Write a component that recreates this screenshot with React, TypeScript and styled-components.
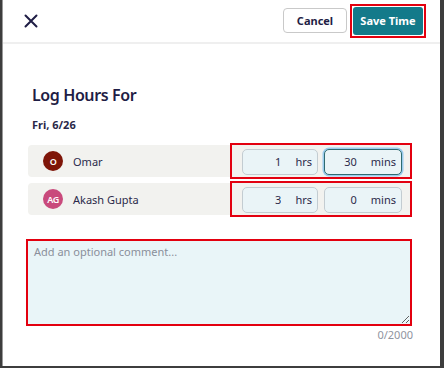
import styled, { createGlobalStyle } from "styled-components";

const navy = "#1f1d45";
const annotation = "#e3000f";

const GlobalStyle = createGlobalStyle`
  html, body {
    margin: 0;
    padding: 0;
    height: 100%;
  }
  body {
    background: #3d3d3d;
    font-family: "Noto Sans", "Open Sans", Arial, sans-serif;
    color: ${navy};
  }
`;

interface IPerson {
  initials: string;
  name: string;
  color: string;
  hours: number;
  mins: number;
  focusMins?: boolean;
}

const people: IPerson[] = [
  { initials: "O", name: "Omar", color: "#7e1508", hours: 1, mins: 30, focusMins: true },
  { initials: "AG", name: "Akash Gupta", color: "#c94a7c", hours: 3, mins: 0 },
];

export default function App() {
  return (
    <>
      <GlobalStyle />
      <Frame>
        <Header>
          <CloseButton aria-label="Close">
            <svg width="14" height="14" viewBox="0 0 14 14">
              <path d="M1.5 1.5 L12.5 12.5 M12.5 1.5 L1.5 12.5" stroke={navy} strokeWidth="2" strokeLinecap="round" />
            </svg>
          </CloseButton>
          <Actions>
            <CancelButton>Cancel</CancelButton>
            <Highlight>
              <SaveButton>Save Time</SaveButton>
            </Highlight>
          </Actions>
        </Header>
        <Body>
          <Title>Log Hours For</Title>
          <DateLabel>Fri, 6/26</DateLabel>
          <Rows>
            {people.map((p) => (
              <Row key={p.name}>
                <Avatar color={p.color}>{p.initials}</Avatar>
                <Name>{p.name}</Name>
                <InputGroup>
                  <TimeField width={76}>
                    <TimeInput readOnly value={p.hours} />
                    <Unit>hrs</Unit>
                  </TimeField>
                  <TimeField width={78} focused={p.focusMins}>
                    <TimeInput readOnly value={p.mins} />
                    <Unit>mins</Unit>
                  </TimeField>
                </InputGroup>
              </Row>
            ))}
          </Rows>
          <Comment placeholder="Add an optional comment..." />
          <Counter>0/2000</Counter>
        </Body>
      </Frame>
    </>
  );
}

const Frame = styled.div`
  margin-left: 2px;
  width: 438px;
  height: 366px;
  background: #fff;
  border-left: 1px solid #9a9a9a;
  box-sizing: border-box;
`;

const Header = styled.div`
  height: 44px;
  box-sizing: border-box;
  border-bottom: 2px solid #efefef;
  display: flex;
  align-items: center;
  justify-content: space-between;
  padding: 0 14px 0 21px;
`;

const CloseButton = styled.button`
  border: none;
  background: none;
  padding: 0;
  width: 14px;
  height: 14px;
  display: flex;
  margin-top: -1px;
`;

const Actions = styled.div`
  display: flex;
  align-items: center;
  gap: 3px;
  margin-top: -1px;
`;

const CancelButton = styled.button`
  width: 64px;
  height: 25px;
  border: 1px solid #c9c9c9;
  border-radius: 4px;
  background: #fff;
  color: ${navy};
  font-family: inherit;
  font-size: 11px;
  font-weight: 700;
  padding: 0;
`;

const Highlight = styled.div`
  display: flex;
  padding: 1px;
  border: 2px solid ${annotation};
`;

const SaveButton = styled.button`
  width: 70px;
  height: 28px;
  border: none;
  border-radius: 3px;
  background: #137a8a;
  color: #fff;
  font-family: inherit;
  font-size: 11px;
  font-weight: 700;
  padding: 0;
`;

const Body = styled.div`
  padding: 0 28px 0 25px;
`;

const Title = styled.h1`
  margin: 39px 0 0 4px;
  font-size: 16px;
  line-height: 24px;
  font-weight: 600;
  letter-spacing: -0.4px;
  color: ${navy};
`;

const DateLabel = styled.div`
  margin: 10px 0 0 4px;
  font-size: 11px;
  line-height: 16px;
  font-weight: 700;
  color: #2a2848;
`;

const Rows = styled.div`
  margin-top: 12px;
  display: flex;
  flex-direction: column;
  gap: 6px;
`;

const Row = styled.div`
  height: 32px;
  border-radius: 4px;
  background: #f2f2ef;
  display: flex;
  align-items: center;
  padding-left: 15px;
`;

const Avatar = styled.div<{ color: string }>`
  width: 20px;
  height: 20px;
  border-radius: 50%;
  background: ${(p) => p.color};
  color: #fff;
  font-size: 9px;
  font-weight: 600;
  display: flex;
  align-items: center;
  justify-content: center;
  letter-spacing: -0.5px;
`;

const Name = styled.span`
  margin-left: 10px;
  font-size: 11px;
  color: #2b2a4a;
  flex: 1;
`;

const InputGroup = styled.div`
  align-self: stretch;
  display: flex;
  align-items: center;
  gap: 6px;
  padding: 1px 8px 0 10px;
  margin-right: 2px;
  outline: 2px solid ${annotation};
`;

const TimeField = styled.label<{ width: number; focused?: boolean }>`
  width: ${(p) => p.width}px;
  height: 26px;
  box-sizing: border-box;
  display: flex;
  align-items: center;
  background: #eaf4f7;
  border: 1px solid ${(p) => (p.focused ? "#2f6b70" : "#c3ccd1")};
  box-shadow: ${(p) => (p.focused ? "0 0 0 1.5px #9ccbed" : "none")};
  border-radius: 5px;
  padding-right: 5px;
`;

const TimeInput = styled.input`
  flex: 1;
  min-width: 0;
  border: none;
  background: transparent;
  text-align: right;
  font-family: inherit;
  font-size: 11px;
  color: #2b2a4a;
  padding: 0;
  outline: none;
`;

const Unit = styled.span`
  margin-left: 14px;
  font-size: 11px;
  color: #2b2a4a;
`;

const Comment = styled.textarea`
  display: block;
  margin: 26px 0 0 0;
  width: 382px;
  height: 83px;
  box-sizing: border-box;
  border: none;
  outline: 2px solid ${annotation};
  background: #e9f5f8;
  font-family: inherit;
  font-size: 11px;
  line-height: 16px;
  padding: 3px 6px;
  color: #2b2a4a;
  resize: vertical;
  &::placeholder {
    color: #8a8f9b;
  }
`;

const Counter = styled.div`
  margin-top: 4px;
  width: 385px;
  text-align: right;
  font-size: 11px;
  line-height: 14px;
  color: #8f94a0;
`;
